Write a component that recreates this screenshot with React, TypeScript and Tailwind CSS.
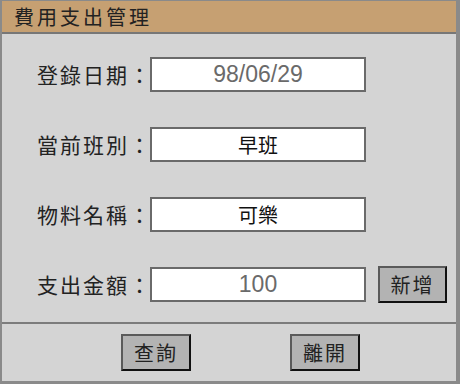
import React from 'react';

const cjk = { fontFamily: '"Noto Sans CJK TC", "Noto Sans CJK SC", sans-serif' };
const latin = { fontFamily: '"Liberation Sans", Arial, sans-serif' };

interface RowProps {
  label: string;
  value: string;
  latinValue?: boolean;
  action?: string;
}

const Btn = ({ children, className = '' }: { children: React.ReactNode; className?: string }) => (
  <button
    className={`flex items-center justify-center bg-[#b3b3b3] text-[#222] text-[20px] tracking-[2px] border-2 border-t-[#5a5a5a] border-l-[#5a5a5a] border-b-[#111] border-r-[#111] ${className}`}
    style={cjk}
  >
    {children}
  </button>
);

const Row = ({ label, value, latinValue, action }: RowProps) => (
  <div className="flex items-center h-[35px]">
    <div className="w-[150px] shrink-0 text-right text-[21px] tracking-[2px] text-[#222] -mr-[2px]" style={cjk}>
      {label}
    </div>
    <div
      className={`w-[216px] h-[35px] bg-white border-2 border-[#6a6a6a] flex items-center justify-center ${latinValue ? 'text-[#6a6a6a] text-[23px]' : 'text-[#111] text-[20px]'}`}
      style={latinValue ? latin : cjk}
    >
      {value}
    </div>
    {action && <Btn className="ml-[12px] w-[69px] h-[37px]">{action}</Btn>}
  </div>
);

export default function App() {
  return (
    <div className="w-[460px] h-[384px] flex flex-col bg-[#d4d4d4] border-l-2 border-r-4 border-t border-b-[3px] border-[#8a8a8a]">
      <div className="h-[33px] shrink-0 bg-[#c6a072] border-b-2 border-[#777] flex items-center pl-[12px]">
        <span className="text-[20px] tracking-[3px] text-[#222]" style={cjk}>費用支出管理</span>
      </div>
      <div className="flex flex-col gap-[35px] pt-[23px] pb-[20px]">
        <Row label="登錄日期：" value="98/06/29" latinValue />
        <Row label="當前班別：" value="早班" />
        <Row label="物料名稱：" value="可樂" />
        <Row label="支出金額：" value="100" latinValue action="新增" />
      </div>
      <div className="border-t-2 border-[#7c7c7c] flex-1 flex items-center gap-[99px] pl-[119px]">
        <Btn className="w-[70px] h-[37px]">查詢</Btn>
        <Btn className="w-[70px] h-[37px]">離開</Btn>
      </div>
    </div>
  );
}
